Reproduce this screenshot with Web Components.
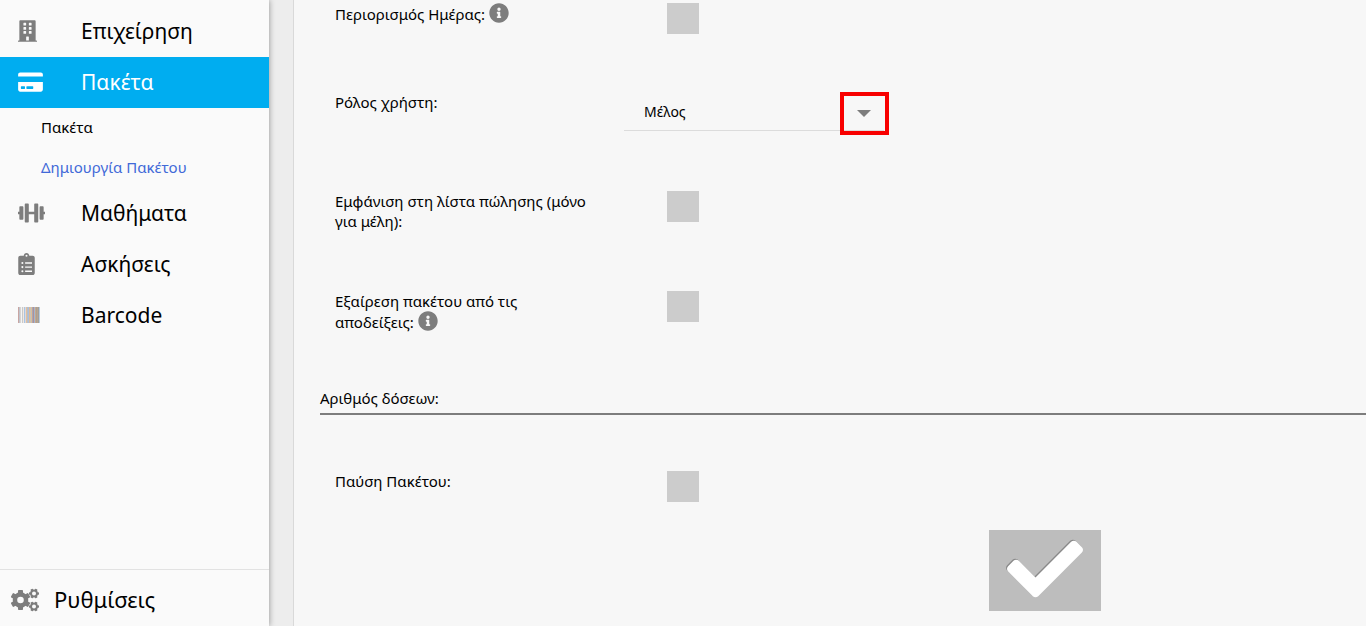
<!DOCTYPE html>
<html lang="el">
<head>
<meta charset="utf-8">
<meta name="viewport" content="width=device-width, initial-scale=1">
<title>Δημιουργία Πακέτου</title>
<style>
  html, body { margin: 0; }
  body { font-family: "Noto Sans", sans-serif; font-size: 15px; line-height: 20px; color: #000; background: #ededed; }
</style>
</head>
<body>
<gym-app>
  <nav-menu slot="side">
    <nav-item icon="building">Επιχείρηση</nav-item>
    <nav-item icon="card" active>Πακέτα</nav-item>
    <nav-sub>Πακέτα</nav-sub>
    <nav-sub current>Δημιουργία Πακέτου</nav-sub>
    <nav-item icon="dumbbell">Μαθήματα</nav-item>
    <nav-item icon="clipboard">Ασκήσεις</nav-item>
    <nav-item icon="barcode">Barcode</nav-item>
    <nav-item slot="bottom" icon="cogs" compact>Ρυθμίσεις</nav-item>
  </nav-menu>
  <package-form></package-form>
</gym-app>

<script>
const gear = (cx, cy, r, teeth, hole, turn) => {
  const body = r * 0.78;
  let s = `<circle cx="${cx}" cy="${cy}" r="${(body + hole) / 2}" fill="none" stroke="currentColor" stroke-width="${body - hole}"/>`;
  for (let i = 0; i < teeth; i++) {
    s += `<rect x="${cx - r * 0.25}" y="${cy - r}" width="${r * 0.5}" height="${r * 0.4}" rx="${r * 0.08}" transform="rotate(${turn + i * 360 / teeth} ${cx} ${cy})"/>`;
  }
  return s;
};
const bars = () => {
  const colours = ['#c9a5a2','#c0c4cc','#d8d5d3','#f4f4f4','#c9c9c9','#f2e8df','#a8c4e4','#d9d9df','#e2bf9e','#b7bfc6','#a9bede','#ddb995','#c5c5b9','#e1bb96','#a6a9b4','#b18f96','#a0b6d0','#c8a98c','#a99f94','#b9a58f','#9f9e9c','#b8cbdd'];
  return colours.map((c, i) => `<rect x="${i}" y="0" width="1" height="16" fill="${c}"/>`).join('');
};
const ICONS = {
  building: [448, 512, 19, 22, '<path fill-rule="evenodd" d="M436 480h-20V24c0-13-11-24-24-24H56C43 0 32 11 32 24v456H12c-7 0-12 5-12 12v20h448v-20c0-7-5-12-12-12zM128 76q0-12 12-12h40q12 0 12 12v40q0 12-12 12h-40q-12 0-12-12zM256 76q0-12 12-12h40q12 0 12 12v40q0 12-12 12h-40q-12 0-12-12zM128 172q0-12 12-12h40q12 0 12 12v40q0 12-12 12h-40q-12 0-12-12zM256 172q0-12 12-12h40q12 0 12 12v40q0 12-12 12h-40q-12 0-12-12zM128 268q0-12 12-12h40q12 0 12 12v40q0 12-12 12h-40q-12 0-12-12zM256 268q0-12 12-12h40q12 0 12 12v40q0 12-12 12h-40q-12 0-12-12zM192 396q0-12 12-12h40q12 0 12 12v84h-64z"/>'],
  card: [576, 512, 25, 22, '<path fill-rule="evenodd" d="M0 432c0 26.500 21.500 48 48 48h480c26.500 0 48-21.500 48-48V256H0zM192 364q0-12 12-12h136q12 0 12 12v40q0 12-12 12H204q-12 0-12-12zM64 364q0-12 12-12h72q12 0 12 12v40q0 12-12 12H76q-12 0-12-12zM576 80v48H0V80c0-26.500 21.500-48 48-48h480c26.500 0 48 21.500 48 48z"/>'],
  dumbbell: [640, 512, 27, 22, '<path d="M104 96H56c-13 0-24 11-24 24v104H8c-4 0-8 4-8 8v48c0 4 4 8 8 8h24v104c0 13 11 24 24 24h48c13 0 24-11 24-24V120c0-13-11-24-24-24zM632 224h-24V120c0-13-11-24-24-24h-48c-13 0-24 11-24 24v272c0 13 11 24 24 24h48c13 0 24-11 24-24V288h24c4 0 8-4 8-8v-48c0-4-4-8-8-8zM456 32h-48c-13 0-24 11-24 24v168H256V56c0-13-11-24-24-24h-48c-13 0-24 11-24 24v400c0 13 11 24 24 24h48c13 0 24-11 24-24V288h128v168c0 13 11 24 24 24h48c13 0 24-11 24-24V56c0-13-11-24-24-24z"/>'],
  clipboard: [384, 512, 17, 22, '<path fill-rule="evenodd" d="M336 64h-80c0-35-29-64-64-64s-64 29-64 64H48C21 64 0 85 0 112v352c0 27 21 48 48 48h288c27 0 48-21 48-48V112c0-27-21-48-48-48zM192 40a24 24 0 1 1 0 48a24 24 0 1 1 0-48zM96 208a24 24 0 1 1 0 48a24 24 0 1 1 0-48zM96 304a24 24 0 1 1 0 48a24 24 0 1 1 0-48zM96 400a24 24 0 1 1 0 48a24 24 0 1 1 0-48zM160 216h160v32H160zM160 312h160v32H160zM160 408h160v32H160z"/>'],
  barcode: [22, 16, 22, 16, bars()],
  cogs: [28, 24, 28, 24, gear(9.5, 12, 10, 6, 3.3, 0) + gear(23, 5.500, 5, 6, 2, 30) + gear(23, 18.500, 5, 6, 2, 30)],
  info: [512, 512, 20, 20, '<path d="M256 8C119 8 8 119 8 256c0 137 111 248 248 248s248-111 248-248C504 119 393 8 256 8zm0 110c23.200 0 42 18.800 42 42s-18.800 42-42 42-42-18.800-42-42 18.800-42 42-42zm56 254c0 6.600-5.400 12-12 12h-88c-6.600 0-12-5.400-12-12v-24c0-6.600 5.400-12 12-12h12v-64h-12c-6.600 0-12-5.400-12-12v-24c0-6.600 5.400-12 12-12h64c6.600 0 12 5.400 12 12v100h12c6.600 0 12 5.400 12 12v24z"/>'],
  check: [512, 512, 76, 76, '<path d="M173.900 439.400l-166.400-166.400c-10-10-10-26.200 0-36.200l36.200-36.200c10-10 26.200-10 36.200 0L192 312.700 432.100 72.600c10-10 26.200-10 36.200 0l36.200 36.200c10 10 10 26.200 0 36.200l-294.400 294.400c-10 10-26.200 10-36.200 0z"/>'],
  caret: [14, 7, 14, 7, '<path d="M0 0h14l-7 7z"/>']
};

class UiIcon extends HTMLElement {
  constructor() { super(); this.attachShadow({ mode: 'open' }); }
  connectedCallback() {
    const [vw, vh, w, h, body] = ICONS[this.getAttribute('name')];
    this.shadowRoot.innerHTML = `<style>:host{display:inline-block;vertical-align:top}svg{display:block}</style>
      <svg width="${w}" height="${h}" viewBox="0 0 ${vw} ${vh}" fill="currentColor" aria-hidden="true">${body}</svg>`;
  }
}
customElements.define('ui-icon', UiIcon);

class GymApp extends HTMLElement {
  constructor() {
    super();
    this.attachShadow({ mode: 'open' }).innerHTML = `<style>
      :host { display: grid; grid-template-columns: 269px minmax(0, 1fr); column-gap: 24px; min-height: 100vh; }
      main { background: #f7f7f7; border-left: 1px solid #d9d9d9; box-sizing: border-box; overflow: hidden; }
    </style><slot name="side"></slot><main><slot></slot></main>`;
  }
}
customElements.define('gym-app', GymApp);

class NavMenu extends HTMLElement {
  constructor() {
    super();
    this.attachShadow({ mode: 'open' }).innerHTML = `<style>
      :host { display: block; background: #fafafa; box-shadow: 0 0 6px rgba(0,0,0,.4); }
      nav { display: flex; flex-direction: column; height: 100%; box-sizing: border-box; padding-top: 6px; }
      .bottom { margin-top: auto; border-top: 1px solid #e2e2e2; padding-top: 5px; }
    </style><nav><slot></slot><div class="bottom"><slot name="bottom"></slot></div></nav>`;
  }
}
customElements.define('nav-menu', NavMenu);

class NavItem extends HTMLElement {
  constructor() { super(); this.attachShadow({ mode: 'open' }); }
  connectedCallback() {
    this.shadowRoot.innerHTML = `<style>
      :host { display: block; font-size: 21px; line-height: 30px; color: #000; }
      a { display: grid; grid-template-columns: 63px 1fr; align-items: center; height: 51px; box-sizing: border-box; padding: 0 0 2px 18px; color: inherit; text-decoration: none; }
      ui-icon { color: #7d7d7d; }
      :host([active]) { background: #00adf0; color: #fff; }
      :host([active]) ui-icon { color: #fff; }
      :host([compact]) { font-size: 22px; }
      :host([compact]) a { grid-template-columns: 43px 1fr; padding-left: 11px; }
      :host([compact]) span { padding-bottom: 2px; }
    </style><a href="#"><ui-icon name="${this.getAttribute('icon')}"></ui-icon><span><slot></slot></span></a>`;
  }
}
customElements.define('nav-item', NavItem);

class NavSub extends HTMLElement {
  constructor() {
    super();
    this.attachShadow({ mode: 'open' }).innerHTML = `<style>
      :host { display: block; color: #000; }
      :host([current]) { color: #4169d8; }
      a { display: block; line-height: 38px; padding: 0 0 2px 41px; color: inherit; text-decoration: none; }
    </style><a href="#"><slot></slot></a>`;
  }
}
customElements.define('nav-sub', NavSub);

const ROW = `
  :host { display: grid; grid-template-columns: 260px 260px; column-gap: 29px; padding-left: 15px; align-items: start; }
  ui-icon { color: #7d7d7d; }
`;

class CheckRow extends HTMLElement {
  constructor() { super(); this.attachShadow({ mode: 'open' }); }
  connectedCallback() {
    const info = this.hasAttribute('info') ? '<ui-icon name="info"></ui-icon>' : '';
    this.shadowRoot.innerHTML = `<style>${ROW}
      :host { min-height: 32px; }
      :host([tall]) { min-height: 43px; }
      ui-icon { margin-left: 4px; vertical-align: -3px; }
      input { appearance: none; width: 32px; height: 31px; margin: 0 0 0 43px; background: #ccc; display: block; }
      input:checked { background: #00adf0; }
    </style><label for="box">${this.getAttribute('label')}${info}</label><input id="box" type="checkbox">`;
  }
}
customElements.define('check-row', CheckRow);

class SelectRow extends HTMLElement {
  constructor() { super(); this.attachShadow({ mode: 'open' }); }
  connectedCallback() {
    this.shadowRoot.innerHTML = `<style>${ROW}
      :host { min-height: 42px; }
      .field { position: relative; }
      select { appearance: none; display: block; width: 100%; height: 39px; padding: 2px 20px 0; border: 0; border-bottom: 1px solid #dcdcdc; border-radius: 0; background: transparent; font: 14px/20px "Noto Sans", sans-serif; color: #000; }
      .mark { position: absolute; right: -5px; top: 0; width: 49px; height: 43px; box-sizing: border-box; padding-right: 2px; border: 4px solid #f80000; display: flex; align-items: center; justify-content: center; pointer-events: none; }
    </style><label for="role">${this.getAttribute('label')}</label>
    <div class="field"><select id="role"><option>Μέλος</option></select><span class="mark"><ui-icon name="caret"></ui-icon></span></div>`;
  }
}
customElements.define('select-row', SelectRow);

class PackageForm extends HTMLElement {
  constructor() {
    super();
    this.attachShadow({ mode: 'open' }).innerHTML = `<style>
      :host { display: block; padding: 3px 0 15px 26px; }
      .rows { display: flex; flex-direction: column; gap: 57px; }
      h2 { margin: 0 0 -1px; font-size: 15px; line-height: 14px; font-weight: 400; padding-bottom: 8px; border-bottom: 2px solid #7d7d7d; }
      button { display: flex; align-items: center; justify-content: center; width: 112px; height: 81px; margin: 27px 0 0 64%; padding: 0 0 4px; border: 0; border-radius: 0; background: #bdbdbd; color: #fff; }
      button ui-icon { filter: drop-shadow(-1px -1px 0 #8a8a8a); }
    </style>
    <form>
      <div class="rows">
        <check-row label="Περιορισμός Ημέρας:" info></check-row>
        <select-row label="Ρόλος χρήστη:"></select-row>
        <check-row tall label="Εμφάνιση στη λίστα πώλησης (μόνο για μέλη):"></check-row>
        <check-row tall label="Εξαίρεση πακέτου από τις αποδείξεις:" info></check-row>
        <h2>Αριθμός δόσεων:</h2>
        <check-row label="Παύση Πακέτου:"></check-row>
      </div>
      <button type="button" aria-label="Αποθήκευση"><ui-icon name="check"></ui-icon></button>
    </form>`;
  }
}
customElements.define('package-form', PackageForm);
</script>
</body>
</html>
